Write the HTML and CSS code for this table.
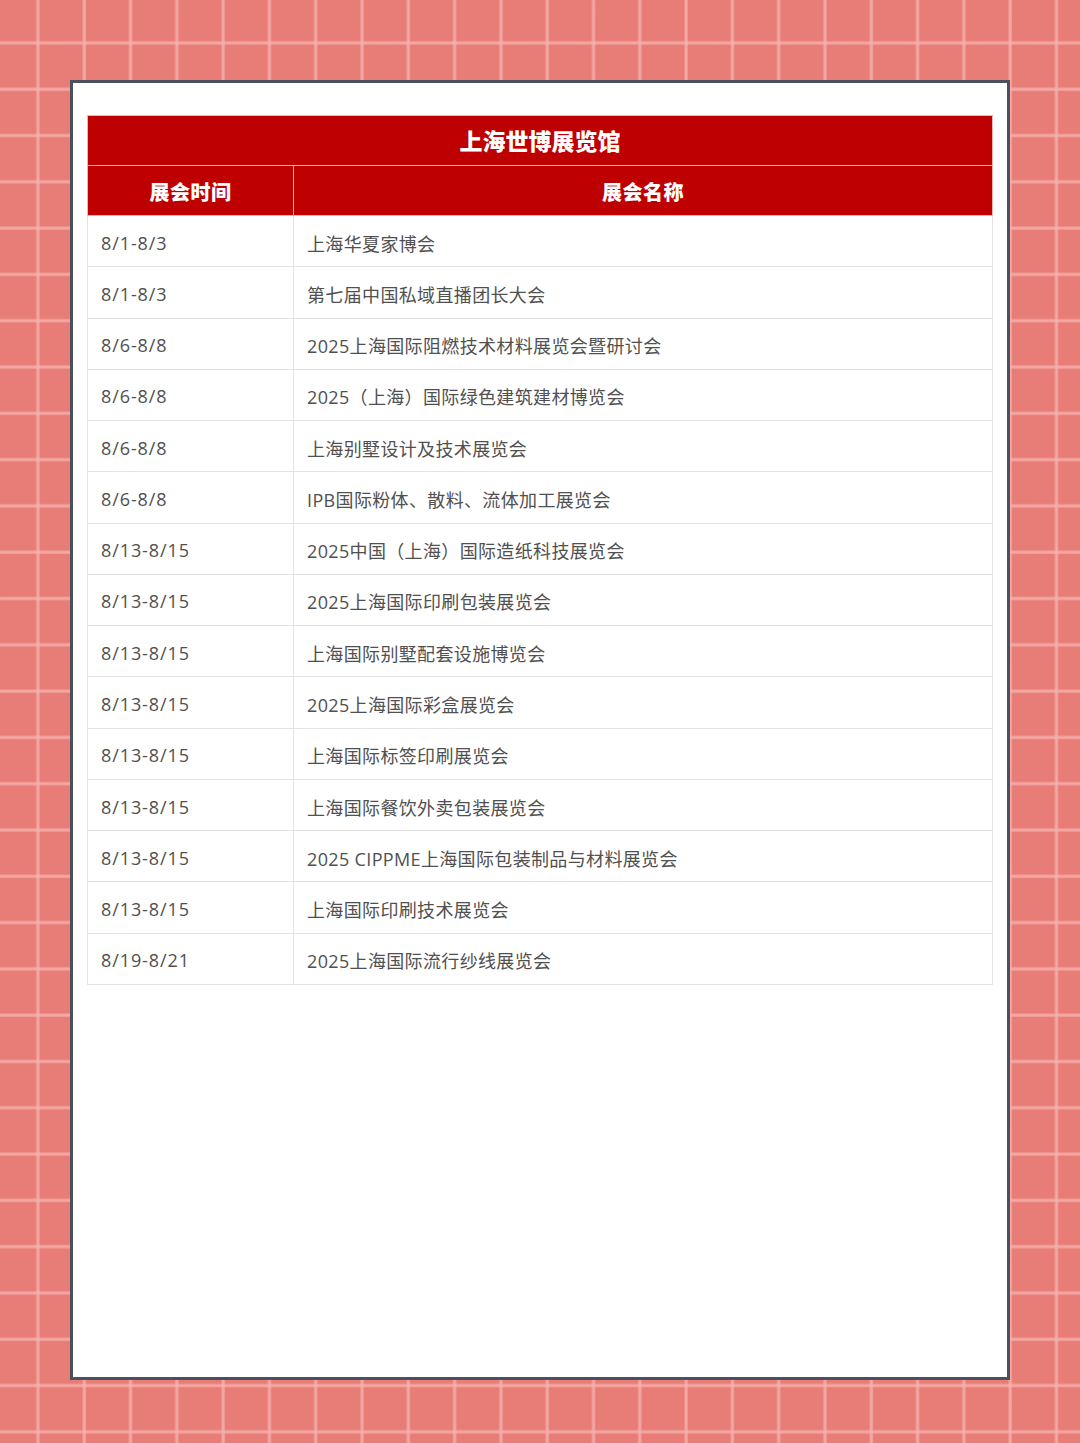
FILE: index.html
```html
<!DOCTYPE html>
<html lang="zh-CN">
<head>
<meta charset="utf-8">
<title>上海世博展览馆</title>
<link rel="stylesheet" href="styles.css">
</head>
<body>
<div class="card">
  <div class="tbl">
    <div class="title">上海世博展览馆</div>
    <div class="th">展会时间</div>
    <div class="th th-name">展会名称</div>

    <div class="cell date">8/1-8/3</div><div class="cell name">上海华夏家博会</div>
    <div class="cell date">8/1-8/3</div><div class="cell name">第七届中国私域直播团长大会</div>
    <div class="cell date">8/6-8/8</div><div class="cell name">2025上海国际阻燃技术材料展览会暨研讨会</div>
    <div class="cell date">8/6-8/8</div><div class="cell name">2025（上海）国际绿色建筑建材博览会</div>
    <div class="cell date">8/6-8/8</div><div class="cell name">上海别墅设计及技术展览会</div>
    <div class="cell date">8/6-8/8</div><div class="cell name">IPB国际粉体、散料、流体加工展览会</div>
    <div class="cell date">8/13-8/15</div><div class="cell name">2025中国（上海）国际造纸科技展览会</div>
    <div class="cell date">8/13-8/15</div><div class="cell name">2025上海国际印刷包装展览会</div>
    <div class="cell date">8/13-8/15</div><div class="cell name">上海国际别墅配套设施博览会</div>
    <div class="cell date">8/13-8/15</div><div class="cell name">2025上海国际彩盒展览会</div>
    <div class="cell date">8/13-8/15</div><div class="cell name">上海国际标签印刷展览会</div>
    <div class="cell date">8/13-8/15</div><div class="cell name">上海国际餐饮外卖包装展览会</div>
    <div class="cell date">8/13-8/15</div><div class="cell name">2025 CIPPME上海国际包装制品与材料展览会</div>
    <div class="cell date">8/13-8/15</div><div class="cell name">上海国际印刷技术展览会</div>
    <div class="cell date">8/19-8/21</div><div class="cell name">2025上海国际流行纱线展览会</div>
  </div>
</div>
</body>
</html>
```

FILE: styles.css
```css
html, body {
  margin: 0;
  padding: 0;
}

body {
  width: 1080px;
  height: 1443px;
  box-sizing: border-box;
  padding: 80px 70px 0;
  overflow: hidden;
  background-color: #e87c77;
  background-image:
    linear-gradient(90deg, transparent 0, rgba(246, 180, 176, 0.7) 1px, rgba(246, 180, 176, 0.8) 3px, transparent 4.5px),
    linear-gradient(180deg, transparent 0, rgba(246, 180, 176, 0.7) 1px, rgba(246, 180, 176, 0.8) 3px, transparent 4.5px);
  background-size: 46.3px 46.3px;
  background-position: 35.8px 40.8px;
  font-family: "Open Sans", "Noto Sans CJK SC", sans-serif;
}

.card {
  width: 940px;
  height: 1300px;
  box-sizing: border-box;
  border: 3px solid #4b505e;
  background: #ffffff;
  padding: 32px 14px 0;
}

.tbl {
  display: grid;
  grid-template-columns: 206px 1fr;
}

.title {
  grid-column: 1 / -1;
  height: 51px;
  box-sizing: border-box;
  background: #bf0000;
  border: 1px solid #eeb3b3;
  color: #ffffff;
  font-family: "Noto Sans CJK SC", sans-serif;
  font-weight: 900;
  font-size: 23px;
  display: flex;
  align-items: center;
  justify-content: center;
  padding-bottom: 2px;
}

.th {
  height: 50px;
  box-sizing: border-box;
  background: #bf0000;
  border-left: 1px solid #eeb3b3;
  border-bottom: 1px solid #eeb3b3;
  color: #ffffff;
  font-family: "Noto Sans CJK SC", sans-serif;
  font-weight: 900;
  font-size: 20px;
  letter-spacing: 0.5px;
  display: flex;
  align-items: center;
  justify-content: center;
  padding-top: 2px;
}

.th-name {
  border-right: 1px solid #eeb3b3;
}

.cell {
  height: 51.27px;
  box-sizing: border-box;
  border-bottom: 1px solid #e3e3e3;
  border-left: 1px solid #e3e3e3;
  display: flex;
  align-items: center;
  padding: 3px 0 0 13px;
  font-size: 18px;
  letter-spacing: 0.35px;
  color: #505050;
  white-space: nowrap;
}

.date {
  letter-spacing: 0.9px;
}

.name {
  border-right: 1px solid #e3e3e3;
}
```
